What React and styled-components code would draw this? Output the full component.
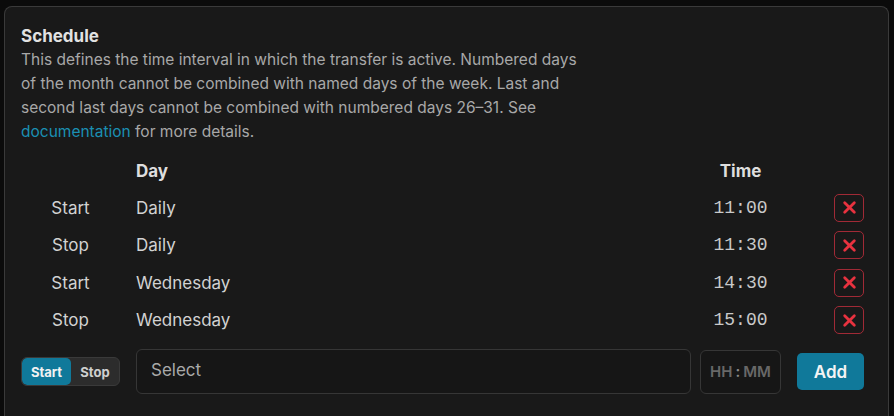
import React, { useState } from 'react';
import styled, { createGlobalStyle } from 'styled-components';

const GlobalStyle = createGlobalStyle`
  html, body {
    margin: 0;
    padding: 0;
    background: #0b0b0b;
    font-family: Inter, "Noto Sans", sans-serif;
    color: #e4e4e4;
  }
`;

const schedule = [
  { type: 'Start', day: 'Daily', time: '11:00' },
  { type: 'Stop', day: 'Daily', time: '11:30' },
  { type: 'Start', day: 'Wednesday', time: '14:30' },
  { type: 'Stop', day: 'Wednesday', time: '15:00' },
];

const XIcon = () => (
  <svg width="15" height="15" viewBox="0 0 14 14" fill="none">
    <path d="M2.5 2.5 L11.5 11.5 M11.5 2.5 L2.5 11.5" stroke="#e8323f" strokeWidth="2.6" strokeLinecap="round" />
  </svg>
);

const App = () => {
  const [mode, setMode] = useState('Start');

  return (
    <>
      <GlobalStyle />
      <Card>
        <Title>Schedule</Title>
        <Description>
          This defines the time interval in which the transfer is active. Numbered days
          <br />
          of the month cannot be combined with named days of the week. Last and
          <br />
          second last days cannot be combined with numbered days 26–31. See
          <br />
          <a href="#docs">documentation</a> for more details.
        </Description>

        <HeaderRow>
          <TypeCell />
          <DayCell $bold>Day</DayCell>
          <TimeCell $header>Time</TimeCell>
          <ActionCell />
        </HeaderRow>

        {schedule.map((item, i) => (
          <Row key={i}>
            <TypeCell>{item.type}</TypeCell>
            <DayCell>{item.day}</DayCell>
            <TimeCell>{item.time}</TimeCell>
            <ActionCell>
              <DeleteButton aria-label="Remove">
                <XIcon />
              </DeleteButton>
            </ActionCell>
          </Row>
        ))}

        <AddRow>
          <TypeCell>
            <Toggle>
              {['Start', 'Stop'].map(m => (
                <ToggleOption key={m} $active={mode === m} onClick={() => setMode(m)}>
                  {m}
                </ToggleOption>
              ))}
            </Toggle>
          </TypeCell>
          <SelectBox>Select</SelectBox>
          <TimeInput>
            HH <span>:</span> MM
          </TimeInput>
          <AddButton>Add</AddButton>
        </AddRow>
      </Card>
    </>
  );
};

const Card = styled.div`
  margin: 6px 5px 0 4px;
  padding: 17px 24px 40px 16px;
  min-height: 420px;
  box-sizing: border-box;
  background: #191919;
  border: 1px solid #3a3a3a;
  border-bottom: none;
  border-radius: 8px 8px 0 0;
`;

const Title = styled.div`
  font-size: 17px;
  font-weight: 700;
  line-height: 24px;
  color: #e2e2e2;
`;

const Description = styled.p`
  margin: 0;
  font-size: 15.5px;
  line-height: 24px;
  color: #a8a8a8;
  white-space: nowrap;
  a {
    color: #1b90b3;
    text-decoration: none;
  }
`;

const HeaderRow = styled.div`
  display: flex;
  align-items: center;
  height: 36px;
  margin-top: 9px;
  font-size: 17px;
  font-weight: 700;
  color: #dedede;
`;

const Row = styled.div`
  display: flex;
  align-items: center;
  height: 37.5px;
  font-size: 17px;
  color: #d2d2d2;
`;

const TypeCell = styled.div`
  width: 99px;
  flex-shrink: 0;
  display: flex;
  justify-content: center;
  margin-right: 16px;
`;

const DayCell = styled.div`
  flex: 1;
  font-weight: ${p => (p.$bold ? 700 : 400)};
`;

const TimeCell = styled.div`
  width: 81px;
  margin-left: 9px;
  text-align: center;
  font-family: ${p => (p.$header ? 'Inter, sans-serif' : '"Liberation Mono", "DejaVu Sans Mono", monospace')};
  font-size: ${p => (p.$header ? '17px' : '18px')};
  color: ${p => (p.$header ? '#dedede' : '#c9c9c9')};
`;

const ActionCell = styled.div`
  width: 67px;
  margin-left: 16px;
  display: flex;
  justify-content: flex-end;
`;

const DeleteButton = styled.button`
  width: 30px;
  height: 28px;
  padding: 0;
  display: flex;
  align-items: center;
  justify-content: center;
  background: transparent;
  border: 1.5px solid #a12a36;
  border-radius: 5px;
  cursor: pointer;
`;

const AddRow = styled.div`
  display: flex;
  align-items: center;
  margin-top: 10px;
`;

const Toggle = styled.div`
  display: flex;
  width: 99px;
  height: 29px;
  box-sizing: border-box;
  background: #2c2c2c;
  border: 1px solid #3a3a3a;
  border-radius: 6px;
  overflow: hidden;
`;

const ToggleOption = styled.div`
  flex: ${p => (p.$active ? '0 0 49px' : 1)};
  display: flex;
  align-items: center;
  justify-content: center;
  font-size: 13px;
  font-weight: 700;
  color: ${p => (p.$active ? '#f2f2f2' : '#cfcfcf')};
  background: ${p => (p.$active ? '#10799a' : 'transparent')};
  border-radius: 5px;
  cursor: pointer;
`;

const SelectBox = styled.div`
  flex: 1;
  height: 45px;
  box-sizing: border-box;
  padding: 0 14px;
  display: flex;
  align-items: center;
  padding-bottom: 4px;
  font-size: 17px;
  color: #a9a9a9;
  background: #161616;
  border: 1px solid #363636;
  border-radius: 6px;
`;

const TimeInput = styled.div`
  width: 81px;
  height: 44px;
  margin-left: 9px;
  box-sizing: border-box;
  display: flex;
  align-items: center;
  justify-content: center;
  gap: 3px;
  font-size: 15px;
  font-weight: 600;
  color: #686868;
  background: #161616;
  border: 1px solid #363636;
  border-radius: 6px;
  span {
    color: #8a8a8a;
  }
`;

const AddButton = styled.button`
  width: 67px;
  height: 37px;
  margin-left: 16px;
  font-family: Inter, sans-serif;
  font-size: 17px;
  font-weight: 600;
  color: #f4f4f4;
  background: #10799a;
  border: none;
  border-radius: 5px;
  cursor: pointer;
`;

export default App;
